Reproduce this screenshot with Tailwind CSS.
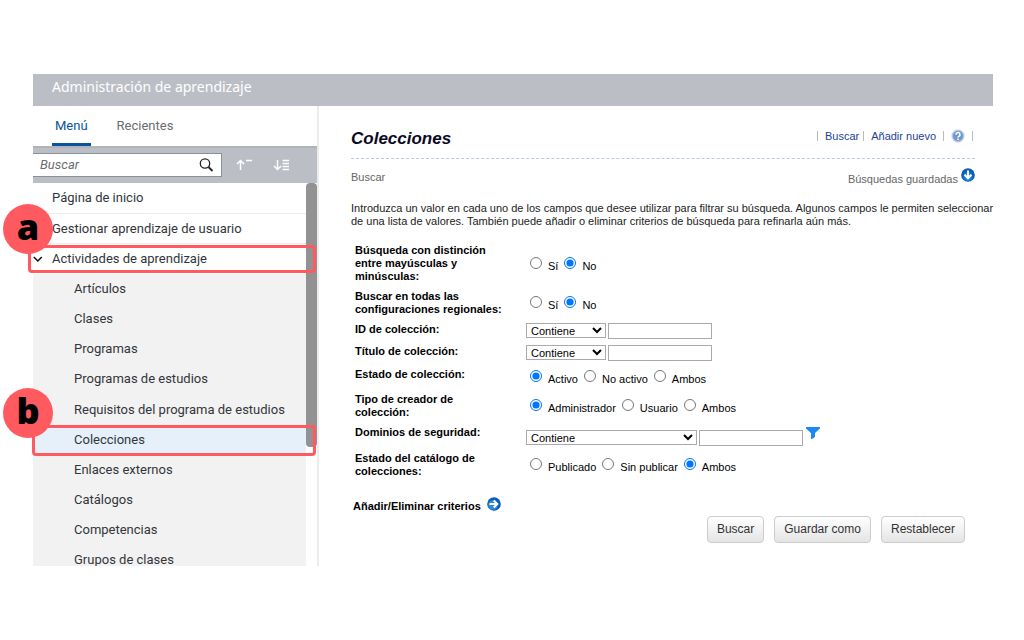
<!DOCTYPE html>
<html lang="es">
<head>
<meta charset="utf-8">
<title>Administración de aprendizaje</title>
<script src="https://cdn.jsdelivr.net/npm/@tailwindcss/browser@4"></script>
</head>
<body class="bg-white pt-[74px] pl-[33px] pr-[31px] text-[11px] text-black font-['Liberation_Sans',sans-serif]">
<header class="flex h-8 items-center bg-[#bcbec6] pl-[19px] pb-1 font-['Noto_Sans',sans-serif]">
  <h1 class="pb-1 text-[14px] text-white">Administración de aprendizaje</h1>
</header>
<div class="flex">
  <aside class="relative w-[286px] shrink-0 border-r-2 border-[#ececec] font-['Roboto',sans-serif] text-[13px] text-[#32363a]">
    <div role="tablist" class="flex h-10 gap-[26px] pl-[19px]">
      <button role="tab" aria-selected="true" class="border-b-3 border-[#0854a0] px-[3px] pt-[3px] text-[#0854a0]">Menú</button>
      <button role="tab" aria-selected="false" class="border-b-3 border-transparent pt-[3px] text-[#6a6d70]">Recientes</button>
    </div>
    <div class="flex h-[37px] items-center border-t-2 border-[#b1b3bb] bg-[#bcbec6] pb-[2px]">
      <div class="flex h-6 w-[189px] items-center border border-l-0 border-[#89919a] bg-white pl-[7px] pr-[7px]">
        <input type="text" aria-label="Buscar en el menú" placeholder="Buscar" class="min-w-0 flex-1 italic outline-none placeholder:text-[#6a6d70]">
        <button aria-label="Buscar" class="size-4"><svg viewBox="0 0 16 16" class="size-4" fill="none" stroke="#222" stroke-width="1.3"><circle cx="7" cy="6.500" r="4.700"/><path d="M10.500 10l4 4" stroke-width="1.800"/></svg></button>
      </div>
      <button aria-label="Contraer todo" class="ml-3 size-5"><svg viewBox="0 0 20 20" class="size-5" fill="none" stroke="#fff" stroke-width="1.500"><path d="M6.500 15V5.500M3 9l3.500-3.500L10 9M12 5.500h6"/></svg></button>
      <button aria-label="Expandir todo" class="ml-[17px] size-5"><svg viewBox="0 0 20 20" class="size-5" fill="none" stroke="#fff" stroke-width="1.500"><path d="M6.500 5v9.500M3 11l3.500 3.500L10 11M11.500 5.500H18M11.500 8.500H18M11.500 11.500H18M11.500 14.500H18"/></svg></button>
    </div>
    <nav class="h-[383px] overflow-hidden pr-[11px]">
      <ul>
        <li class="flex h-[31px] items-center border-b border-[#ebebeb] pl-[19px]"><a href="#">Página de inicio</a></li>
        <li class="flex h-[30px] items-center border-b border-[#ebebeb] pl-[19px]"><a href="#">Gestionar aprendizaje de usuario</a></li>
        <li>
          <a href="#" class="flex h-[30px] items-center gap-[9px]"><svg viewBox="0 0 10 10" class="size-[10px]" fill="none" stroke="#111" stroke-width="1.500"><path d="M.8 3l4 4 4-4"/></svg>Actividades de aprendizaje</a>
          <ul class="bg-[#f2f2f2]">
            <li class="flex h-[30px] items-center pl-[41px]"><a href="#">Artículos</a></li>
            <li class="flex h-[30px] items-center pl-[41px]"><a href="#">Clases</a></li>
            <li class="flex h-[30px] items-center pl-[41px]"><a href="#">Programas</a></li>
            <li class="flex h-[30px] items-center pl-[41px]"><a href="#">Programas de estudios</a></li>
            <li class="flex h-[31px] items-center pl-[41px]"><a href="#">Requisitos del programa de estudios</a></li>
            <li class="flex h-[30px] items-center bg-[#e5f0fa] pl-[41px]"><a href="#" aria-current="page">Colecciones</a></li>
            <li class="flex h-[30px] items-center pl-[41px]"><a href="#">Enlaces externos</a></li>
            <li class="flex h-[30px] items-center pl-[41px]"><a href="#">Catálogos</a></li>
            <li class="flex h-[30px] items-center pl-[41px]"><a href="#">Competencias</a></li>
            <li class="flex h-[30px] items-center pl-[41px]"><a href="#">Grupos de clases</a></li>
          </ul>
        </li>
      </ul>
    </nav>
    <div class="absolute top-[77px] right-0 h-[264px] w-[11px] rounded-[4px] bg-[#929292]"></div>
    <div class="absolute top-[139px] left-[-5px] h-7 w-[288px] rounded-[4px] border-3 border-[#ff5a5f]"></div>
    <div class="absolute top-[319px] left-[-1px] h-[31px] w-[284px] rounded-[4px] border-3 border-[#ff5a5f]"></div>
    <div class="absolute top-[98px] left-[-30px] flex size-[50px] items-center justify-center rounded-full bg-[#ff5a5f] pb-1 font-['Open_Sans',sans-serif] text-[36px] font-extrabold text-black">a</div>
    <div class="absolute top-[282px] left-[-30px] flex size-[50px] items-center justify-center rounded-full bg-[#ff5a5f] pb-1 font-['Open_Sans',sans-serif] text-[36px] font-extrabold text-black">b</div>
  </aside>
  <main class="min-w-0 flex-1 pt-[22px] pr-[18px] pl-8">
    <div class="flex h-[31px] items-start justify-between border-b border-dashed border-[#b9c9de]">
      <h2 class="text-[17px] leading-[22px] font-bold text-[#0a0a1e] italic">Colecciones</h2>
      <div class="flex h-4 items-center text-[#1f3f94]">
        <span class="mr-[7px] h-[10px] w-px bg-[#bbb]"></span><a href="#">Buscar</a>
        <span class="mr-[7px] ml-1 h-[10px] w-px bg-[#bbb]"></span><a href="#">Añadir nuevo</a>
        <span class="mx-[7px] h-[10px] w-px bg-[#bbb]"></span>
        <a href="#" aria-label="Ayuda"><svg viewBox="0 0 14 14" class="size-[14px]"><circle cx="7" cy="7" r="6.500" fill="#b4c8e3"/><circle cx="7" cy="7" r="5" fill="#6f98cc"/><path d="M5 5.700a2 2 0 1 1 2.800 1.700q-.8.400-.8 1.200M7 9.600v1.300" stroke="#fff" stroke-width="1.500" fill="none"/></svg></a>
        <span class="mr-[2px] ml-[7px] h-[10px] w-px bg-[#bbb]"></span>
      </div>
    </div>
    <div class="flex h-[43px] justify-between pt-[9px] text-[#666]">
      <span class="pt-px">Buscar</span>
      <button class="flex h-5 gap-[3px]"><span class="pt-[3px]">Búsquedas guardadas</span><svg viewBox="0 0 14 14" class="size-[14px]"><circle cx="7" cy="7" r="6.800" fill="#0d5db5"/><circle cx="7" cy="8.500" r="4.500" fill="#1c80d8"/><path d="M7 2.500v7.500M3.500 6.800L7 10.300l3.500-3.500" stroke="#fff" stroke-width="2" fill="none"/></svg></button>
    </div>
    <p class="-mr-6 leading-[13px] text-[#222]">Introduzca un valor en cada uno de los campos que desee utilizar para filtrar su búsqueda. Algunos campos le permiten seleccionar de una lista de valores. También puede añadir o eliminar criterios de búsqueda para refinarla aún más.</p>
    <form class="pt-4 leading-[13px]">
      <fieldset class="grid h-[46px] grid-cols-[171px_1fr] pl-1">
        <div class="w-[150px] font-bold">Búsqueda con distinción entre mayúsculas y minúsculas:</div>
        <div class="flex items-start gap-[6px] pt-[13px] pl-[4px]">
          <label class="flex gap-[6px]"><input type="radio" name="mayus" class="size-3"><span class="pt-[3px]">Sí</span></label>
          <label class="flex gap-[6px]"><input type="radio" name="mayus" checked class="size-3"><span class="pt-[3px]">No</span></label>
        </div>
      </fieldset>
      <fieldset class="grid h-[33px] grid-cols-[171px_1fr] pl-1">
        <div class="w-[150px] font-bold">Buscar en todas las configuraciones regionales:</div>
        <div class="flex items-start gap-[6px] pt-[6px] pl-[4px]">
          <label class="flex gap-[6px]"><input type="radio" name="region" class="size-3"><span class="pt-[3px]">Sí</span></label>
          <label class="flex gap-[6px]"><input type="radio" name="region" checked class="size-3"><span class="pt-[3px]">No</span></label>
        </div>
      </fieldset>
      <div class="grid h-[22px] grid-cols-[171px_1fr] pl-1">
        <label for="idcol" class="font-bold">ID de colección:</label>
        <div class="flex gap-[2px]">
          <select aria-label="Operador de ID" class="h-[15px] w-[80px] border border-[#aaa] bg-white text-[11px]"><option>Contiene</option></select>
          <input id="idcol" type="text" class="h-4 w-[104px] border border-[#aaa]">
        </div>
      </div>
      <div class="grid h-[23px] grid-cols-[171px_1fr] pl-1">
        <label for="titcol" class="font-bold">Título de colección:</label>
        <div class="flex gap-[2px]">
          <select aria-label="Operador de título" class="h-[15px] w-[80px] border border-[#aaa] bg-white text-[11px]"><option>Contiene</option></select>
          <input id="titcol" type="text" class="h-4 w-[104px] border border-[#aaa]">
        </div>
      </div>
      <fieldset class="grid h-[25px] grid-cols-[171px_1fr] pl-1">
        <div class="w-[150px] font-bold">Estado de colección:</div>
        <div class="flex items-start gap-[6px] pt-[2px] pl-[4px]">
          <label class="flex gap-[6px]"><input type="radio" name="estado" checked class="size-3"><span class="pt-[3px]">Activo</span></label>
          <label class="flex gap-[6px]"><input type="radio" name="estado" class="size-3"><span class="pt-[3px]">No activo</span></label>
          <label class="flex gap-[6px]"><input type="radio" name="estado" class="size-3"><span class="pt-[3px]">Ambos</span></label>
        </div>
      </fieldset>
      <fieldset class="grid h-[33px] grid-cols-[171px_1fr] pl-1">
        <div class="w-[110px] font-bold">Tipo de creador de colección:</div>
        <div class="flex items-start gap-[6px] pt-[6px] pl-[4px]">
          <label class="flex gap-[6px]"><input type="radio" name="creador" checked class="size-3"><span class="pt-[3px]">Administrador</span></label>
          <label class="flex gap-[6px]"><input type="radio" name="creador" class="size-3"><span class="pt-[3px]">Usuario</span></label>
          <label class="flex gap-[6px]"><input type="radio" name="creador" class="size-3"><span class="pt-[3px]">Ambos</span></label>
        </div>
      </fieldset>
      <div class="grid h-[26px] grid-cols-[171px_1fr] pl-1">
        <label for="dom" class="font-bold">Dominios de seguridad:</label>
        <div class="flex items-start gap-[2px]">
          <select aria-label="Operador de dominios" class="mt-1 h-[15px] w-[171px] border border-[#aaa] bg-white text-[11px]"><option>Contiene</option></select>
          <input id="dom" type="text" class="mt-1 h-4 w-[104px] border border-[#aaa]">
          <button type="button" aria-label="Filtrar" class="pl-px"><svg viewBox="0 0 14 14" class="size-[14px]" fill="#1e88f0"><path d="M0 1h14v1.500L9 7v4l-3 2H5V7L0 2.500z"/></svg></button>
        </div>
      </div>
      <fieldset class="grid h-[45px] grid-cols-[171px_1fr] pl-1">
        <div class="w-[130px] font-bold">Estado del catálogo de colecciones:</div>
        <div class="flex items-start gap-[6px] pt-[6px] pl-[4px]">
          <label class="flex gap-[6px]"><input type="radio" name="catalogo" class="size-3"><span class="pt-[3px]">Publicado</span></label>
          <label class="flex gap-[6px]"><input type="radio" name="catalogo" class="size-3"><span class="pt-[3px]">Sin publicar</span></label>
          <label class="flex gap-[6px]"><input type="radio" name="catalogo" checked class="size-3"><span class="pt-[3px]">Ambos</span></label>
        </div>
      </fieldset>
      <button type="button" class="flex gap-[6px] pl-[2px] font-bold"><span class="pt-[3px]">Añadir/Eliminar criterios</span><svg viewBox="0 0 14 14" class="size-[14px]"><circle cx="7" cy="7" r="6.800" fill="#0d5db5"/><circle cx="6" cy="8" r="4.800" fill="#2c8ee0"/><path d="M2.500 7H10M6.800 3.500L10.300 7l-3.500 3.500" stroke="#fff" stroke-width="2" fill="none"/></svg></button>
      <div class="flex justify-end gap-[10px] pt-[3px] pr-[10px]">
        <button type="submit" class="h-[27px] rounded-[4px] border border-[#ccc] bg-linear-to-b from-white to-[#e4e4e4] px-[9px] text-[12px] text-[#333]">Buscar</button>
        <button type="button" class="h-[27px] rounded-[4px] border border-[#ccc] bg-linear-to-b from-white to-[#e4e4e4] px-[9px] text-[12px] text-[#333]">Guardar como</button>
        <button type="reset" class="h-[27px] rounded-[4px] border border-[#ccc] bg-linear-to-b from-white to-[#e4e4e4] px-[9px] text-[12px] text-[#333]">Restablecer</button>
      </div>
    </form>
  </main>
</div>
</body>
</html>
